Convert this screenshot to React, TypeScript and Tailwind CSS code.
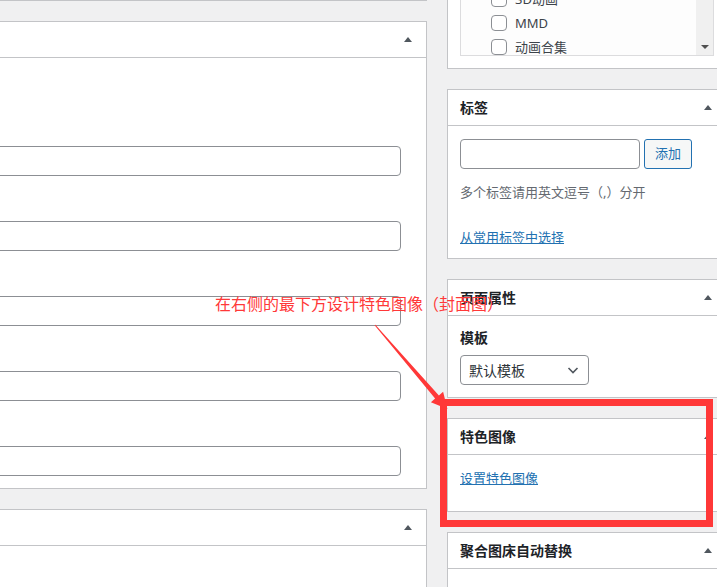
import React from "react";

// Collapse arrow in the meta box headers
function Toggle() {
  return (
    <div className="w-[36px] h-full flex items-center justify-center">
      <div className="w-0 h-0 border-x-[4px] border-x-transparent border-b-[5px] border-b-[#50575e]" />
    </div>
  );
}

function BoxHeader({ title }: { title?: string }) {
  return (
    <div className="h-[36px] flex items-center justify-between border-b border-[#c3c4c7]">
      <h2 className="pl-[12px] text-[14px] leading-[20px] font-semibold text-[#1d2327]">
        {title}
      </h2>
      <Toggle />
    </div>
  );
}

const categories = ["3D动画", "MMD", "动画合集"];

export default function App() {
  return (
    <div className="relative w-[717px] h-[587px] overflow-hidden bg-[#f0f0f1] font-['Noto_Sans','Noto_Sans_CJK_SC',sans-serif] text-[13px] text-[#3c434a]">
      <div className="flex">
        {/* Main column */}
        <div className="w-[427px] shrink-0">
          <div className="h-px bg-[#c3c4c7]" />

          <div className="mt-[20px] bg-white border border-l-0 border-[#c3c4c7]">
            <div className="h-[36px] flex items-center justify-end border-b border-[#c3c4c7]">
              <Toggle />
            </div>
            <div className="pt-[88px] pb-[12px] flex flex-col gap-[45px]">
              {[0, 1, 2, 3, 4].map((i) => (
                <div
                  key={i}
                  className="-ml-[10px] w-[411px] h-[30px] rounded-[4px] border border-[#8c8f94] bg-white"
                />
              ))}
            </div>
          </div>

          <div className="mt-[20px] h-[200px] bg-white border border-l-0 border-[#c3c4c7]">
            <div className="h-[36px] flex items-center justify-end border-b border-[#c3c4c7]">
              <Toggle />
            </div>
          </div>
        </div>

        {/* Sidebar */}
        <div className="ml-[20px] w-[280px] shrink-0">
          {/* Categories (scrolled off the top) */}
          <div className="h-[69px] overflow-hidden flex flex-col justify-end">
            <div className="bg-white border-x border-b border-[#c3c4c7] px-[12px] pb-[12px]">
              <div className="h-[200px] flex border border-[#dcdcde] bg-[#fdfdfd] overflow-hidden">
                <div className="flex-1 flex flex-col justify-end pl-[30px]">
                  <div className="-mb-[4px]">
                    {categories.map((c) => (
                      <div key={c} className="h-[24px] flex items-center gap-[8px]">
                        <span className="w-[16px] h-[16px] rounded-[4px] border border-[#8c8f94] bg-white" />
                        <span className="text-[13px] leading-[20px] text-[#3c434a]">{c}</span>
                      </div>
                    ))}
                  </div>
                </div>
                <div className="w-[17px] bg-[#f0f0f0] flex flex-col justify-end">
                  <div className="h-[17px] flex items-center justify-center">
                    <div className="w-0 h-0 border-x-[4px] border-x-transparent border-t-[4px] border-t-[#505050]" />
                  </div>
                </div>
              </div>
            </div>
          </div>

          {/* Tags */}
          <div className="mt-[20px] bg-white border border-[#c3c4c7]">
            <BoxHeader title="标签" />
            <div className="px-[12px] pt-[13px] pb-[11px]">
              <div className="flex gap-[4px]">
                <div className="w-[180px] h-[30px] rounded-[4px] border border-[#8c8f94] bg-white" />
                <button className="w-[48px] h-[30px] rounded-[3px] border border-[#2271b1] bg-[#f6f7f7] text-[13px] text-[#2271b1]">
                  添加
                </button>
              </div>
              <p className="mt-[13px] leading-[20px] text-[#646970]">多个标签请用英文逗号（,）分开</p>
              <p className="mt-[25px] leading-[20px]">
                <a className="text-[#2271b1] underline">从常用标签中选择</a>
              </p>
            </div>
          </div>

          {/* Page attributes */}
          <div className="mt-[20px] bg-white border border-[#c3c4c7]">
            <BoxHeader title="页面属性" />
            <div className="px-[12px] pt-[12px] pb-[12px]">
              <p className="text-[14px] leading-[20px] font-semibold text-[#1d2327]">模板</p>
              <div className="mt-[7px] w-[129px] h-[30px] rounded-[4px] border border-[#8c8f94] bg-white flex items-center justify-between pl-[8px] pr-[8px]">
                <span className="text-[14px] text-[#2c3338]">默认模板</span>
                <svg width="14" height="14" viewBox="0 0 14 14" fill="none">
                  <path d="M2.5 5l4.5 4.5L11.5 5" stroke="#50575e" strokeWidth="1.6" />
                </svg>
              </div>
            </div>
          </div>

          {/* Featured image */}
          <div className="mt-[20px] bg-white border border-[#c3c4c7]">
            <BoxHeader title="特色图像" />
            <div className="px-[12px] pt-[13px] pb-[23px]">
              <p className="leading-[20px]">
                <a className="text-[#2271b1] underline">设置特色图像</a>
              </p>
            </div>
          </div>

          {/* Image host replace */}
          <div className="mt-[20px] h-[200px] bg-white border border-[#c3c4c7]">
            <BoxHeader title="聚合图床自动替换" />
          </div>
        </div>
      </div>

      {/* Annotation overlay */}
      <div className="absolute left-[440px] top-[399px] w-[273px] h-[128px] border-[7px] border-[#ff3838]" />
      <svg className="absolute left-0 top-0" width="717" height="587" viewBox="0 0 717 587">
        <polygon
          points="375.4,324.7 438.9,395.4 443.1,391.8 447.4,409.1 430.9,402.2 435.1,398.6 374.6,325.3"
          fill="#ff3838"
        />
      </svg>
      <p className="absolute left-[215px] top-[294px] text-[16px] leading-[20px] text-[#ff3838] whitespace-nowrap">
        在右侧的最下方设计特色图像（封面图）
      </p>
    </div>
  );
}
